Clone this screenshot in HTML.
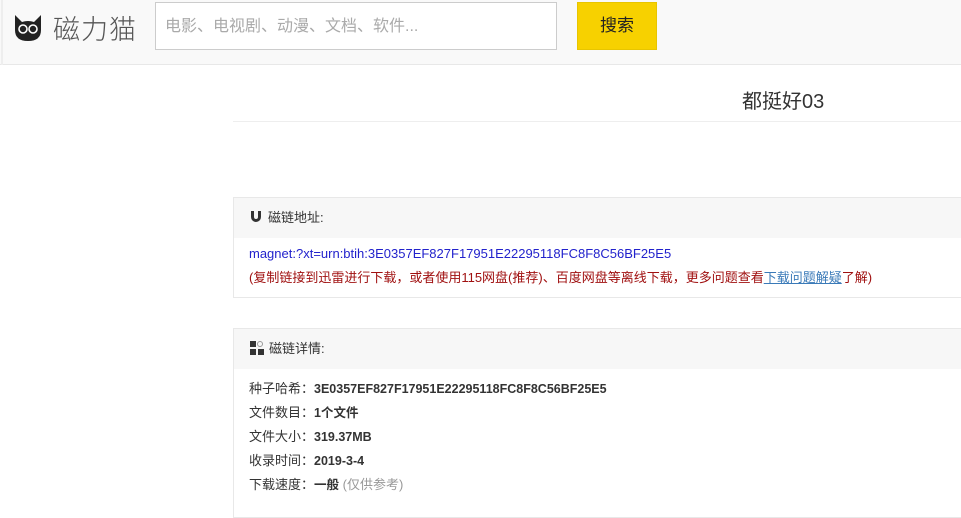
<!DOCTYPE html>
<html><head><meta charset="utf-8"><style>
*{margin:0;padding:0;box-sizing:border-box}
body{width:961px;height:509px;overflow:hidden;background:#fff;font-family:"Liberation Sans","Noto Sans CJK SC",sans-serif;color:#333;position:relative}
.hdr{position:absolute;left:0;top:0;width:961px;height:65px;background:#f9f9f9;border-bottom:1px solid #e8e8e8}
.lb{position:absolute;left:1px;top:0;width:2px;height:65px;background:#eee}
.logo{position:absolute;left:53px;top:8px;font-size:27px;color:#555;font-weight:300;letter-spacing:1px}
.inp{position:absolute;left:155px;top:2px;width:402px;height:48px;border:1px solid #ccc;background:#fff;font-size:16px;color:#aaa;padding:14px 9px;line-height:20px}
.btn{position:absolute;left:577px;top:2px;width:80px;height:48px;background:#f7d100;border:1px solid #e8c500;font-size:17px;color:#222;text-align:center;line-height:46px}
.title{position:absolute;left:233px;top:85px;width:728px;height:37px;border-bottom:1px solid #eee;font-size:20px;color:#333;padding-left:509px}
.panel{position:absolute;left:233px;width:740px;border:1px solid #e8e8e8}
.ph{background:#f7f7f7;height:40px;line-height:40px;padding-left:16px;font-size:13px;color:#333}
.pb{padding:8px 15px;font-size:13px;line-height:24px}
b{font-weight:bold;font-size:12.5px}
</style></head><body>
<div class="hdr">
<div class="lb"></div>
<svg style="position:absolute;left:13px;top:14px" width="30" height="28" viewBox="0 0 30 28"><path d="M2 1 L9 8 Q15 6 21 8 L28 1 L28 16 Q28 27 15 27 Q2 27 2 16Z" fill="#222"/><circle cx="10" cy="15" r="4" fill="none" stroke="#fff" stroke-width="1.6"/><circle cx="20" cy="15" r="4" fill="none" stroke="#fff" stroke-width="1.6"/></svg>
<div class="logo">磁力猫</div>
<div class="inp">电影、电视剧、动漫、文档、软件...</div>
<div class="btn">搜索</div>
</div>
<div class="title">都挺好03</div>
<div class="panel" style="top:197px;height:101px">
<div class="ph"><svg width="12" height="12" viewBox="0 0 12 12" style="vertical-align:-1px;margin-right:6px"><path d="M1 0 V6 A5 5 0 0 0 11 6 V0 H8 V6 A2 2 0 0 1 4 6 V0Z" fill="#333"/></svg>磁链地址:</div>
<div class="pb" style="padding-top:4px"><div style="color:#2222cc">magnet:?xt=urn:btih:3E0357EF827F17951E22295118FC8F8C56BF25E5</div>
<div style="color:#a01010">(复制链接到迅雷进行下载，或者使用115网盘(推荐)、百度网盘等离线下载，更多问题查看<span style="color:#3a7ab8;text-decoration:underline">下载问题解疑</span>了解)</div></div>
</div>
<div class="panel" style="top:328px;height:190px">
<div class="ph"><svg width="14" height="14" viewBox="0 0 14 14" style="vertical-align:-2px;margin-right:5px"><rect x="0" y="0" width="6" height="6" fill="#333"/><circle cx="10" cy="3" r="2.5" fill="none" stroke="#999"/><rect x="0" y="8" width="6" height="6" fill="#333"/><rect x="8" y="8" width="6" height="6" fill="#333"/></svg>磁链详情:</div>
<div class="pb" style="padding-top:8px">
<div>种子哈希：<b>3E0357EF827F17951E22295118FC8F8C56BF25E5</b></div>
<div>文件数目：<b>1个文件</b></div>
<div>文件大小：<b>319.37MB</b></div>
<div>收录时间：<b>2019-3-4</b></div>
<div>下载速度：<b>一般</b> <span style="color:#999">(仅供参考)</span></div>
</div></div>
</body></html>
